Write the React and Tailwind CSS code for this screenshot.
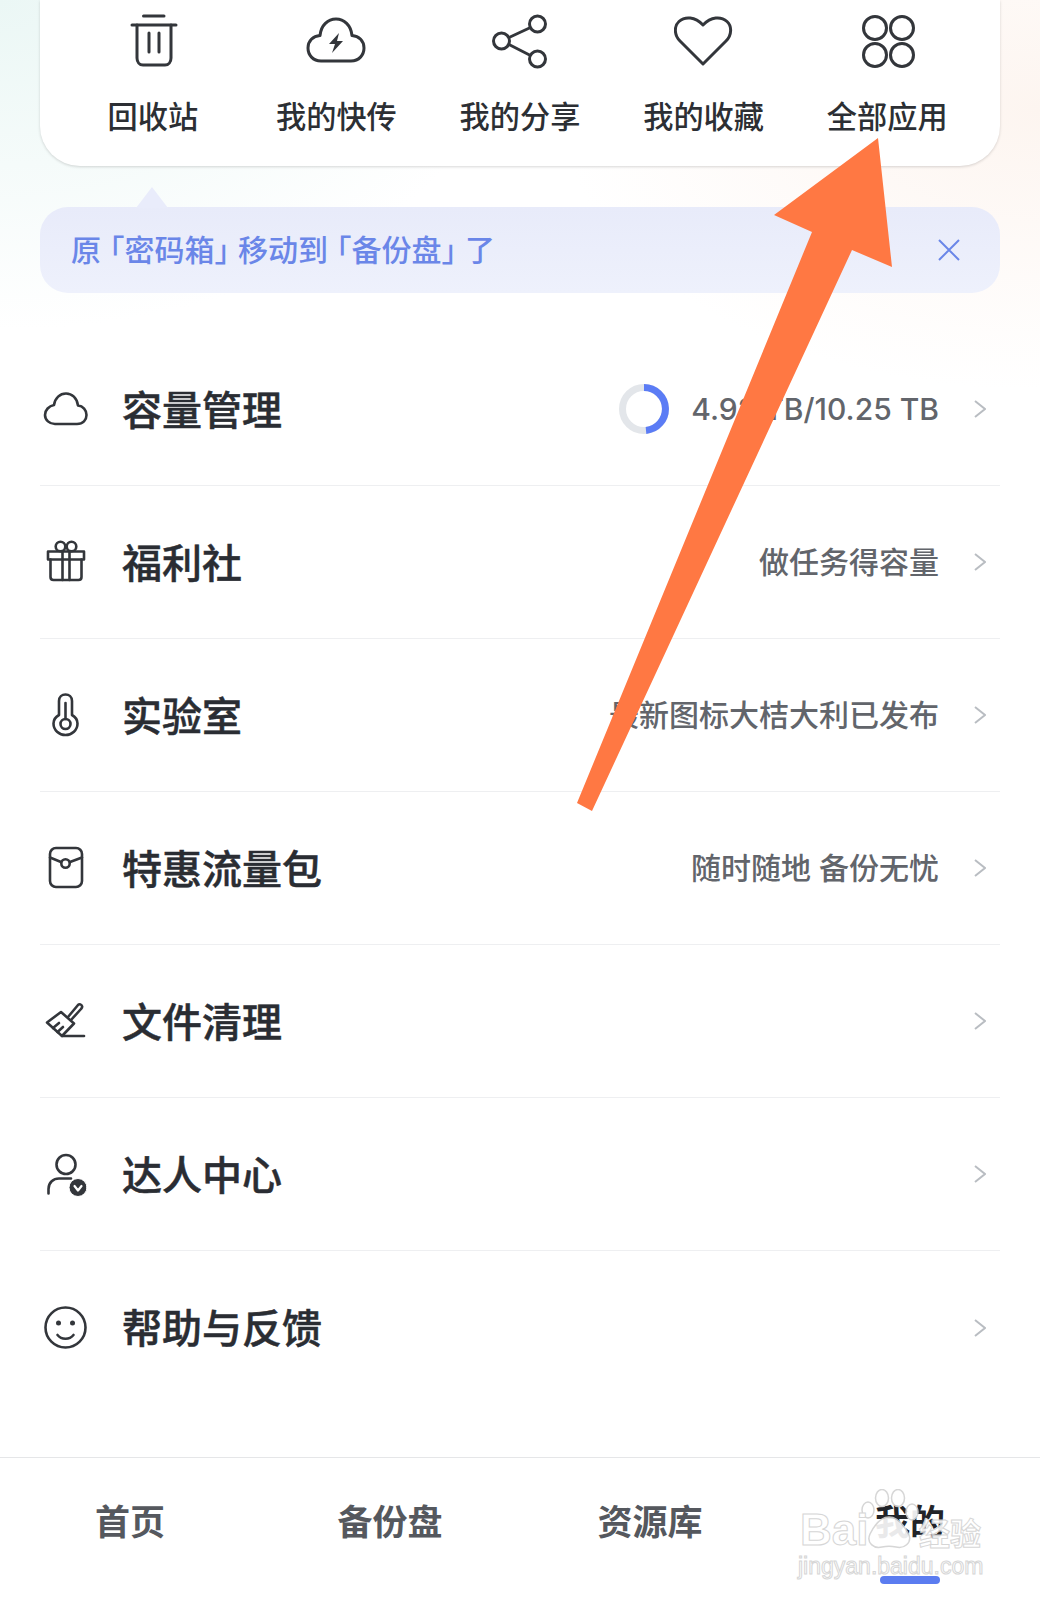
import React from 'react';

const ink = '#33363b';

// top card icons, all in a 60 box
const TrashIcon = () => (
  <svg width="60" height="60" viewBox="0 0 60 60" fill="none" stroke={ink} strokeWidth="3" strokeLinecap="round" strokeLinejoin="round">
    <path d="M20.500 5H41" />
    <path d="M9 14H53" />
    <path d="M14 14V47C14 51 16.500 54 20 54H42C45.500 54 48 51 48 47V14" />
    <path d="M26 22V41M36 22V41" />
  </svg>
);

const CloudBoltIcon = () => (
  <svg width="60" height="60" viewBox="0 0 60 60" fill="none" stroke={ink} strokeWidth="3" strokeLinejoin="round">
    <path d="M15 50H45C53 50 58 44 58 37C58 30 53 25 46 24.500C45 14 38 8 30 8C22 8 15 14 14 24.500C7 25 2 30 2 37C2 44 7 50 15 50Z" />
    <path d="M33 22L23 33H29L26 42L37 30H31L33 22Z" fill={ink} stroke="none" />
  </svg>
);

const ShareIcon = () => (
  <svg width="60" height="60" viewBox="0 0 60 60" fill="none" stroke={ink} strokeWidth="3">
    <circle cx="47.500" cy="13" r="8" />
    <circle cx="11.500" cy="30" r="8" />
    <circle cx="47.500" cy="48" r="8" />
    <path d="M19 26.500L40.500 16.500M19 33.500L40.500 44.500" />
  </svg>
);

const HeartIcon = () => (
  <svg width="60" height="60" viewBox="0 0 60 60" fill="none" stroke={ink} strokeWidth="3" strokeLinejoin="round">
    <path d="M29 53L6 30C0 24 0 15 5 10.500C11 5 21 5.500 29 14C37 5.500 47 5 53 10.500C58 15 58 24 52 30Z" />
  </svg>
);

const AppsIcon = () => (
  <svg width="60" height="60" viewBox="0 0 60 60" fill="none" stroke={ink} strokeWidth="3">
    <circle cx="18" cy="17" r="11.500" />
    <circle cx="45" cy="17" r="11.500" />
    <circle cx="18" cy="44" r="11.500" />
    <circle cx="45" cy="44" r="11.500" />
  </svg>
);

// list icons, all in a 52 box
const rowSvg = { width: 52, height: 52, viewBox: '0 0 52 52', fill: 'none', stroke: ink, strokeWidth: 2.600, strokeLinecap: 'round', strokeLinejoin: 'round' };

const CloudIcon = () => (
  <svg {...rowSvg}>
    <path d="M15 41H37C43 41 46.500 37 46.500 32C46.500 27 43 23 38 22.500C37 15 32 10.500 26 10.500C20 10.500 15 15 14 22C9 23 5 27 5 32C5 37 9.500 41 15 41Z" />
  </svg>
);

const GiftIcon = () => (
  <svg {...rowSvg}>
    <path d="M8 15.500H44V23.500H8Z" />
    <path d="M10.500 23.500V41C10.500 43 11.500 44 13.500 44H38.500C40.500 44 41.500 43 41.500 41V23.500" />
    <path d="M22.500 15.500V44M29.500 15.500V44" />
    <circle cx="20.500" cy="10.500" r="4.800" />
    <circle cx="31.500" cy="10.500" r="4.800" />
  </svg>
);

const ThermoIcon = () => (
  <svg {...rowSvg}>
    <path d="M19 26V12C19 8 22 5.500 25.500 5.500C29 5.500 32 8 32 12V26C35.500 28 37.500 31 37.500 34.500C37.500 41 32 46 25.500 46C19 46 13.500 41 13.500 34.500C13.500 31 15.500 28 19 26Z" />
    <circle cx="25.500" cy="35" r="5" />
    <path d="M25.500 14V30" />
  </svg>
);

const PackIcon = () => (
  <svg {...rowSvg}>
    <rect x="10" y="6" width="32" height="39" rx="6" />
    <path d="M10 15.500L21 20M30 20L42 15.500" />
    <circle cx="25.500" cy="21.500" r="4.200" />
  </svg>
);

const BroomIcon = () => (
  <svg {...rowSvg}>
    <path d="M7 27.500L21 17L34 28.500L22 41L7 27.500Z" />
    <path d="M28 22L38 10C39.500 8.500 41.500 9.500 42 11C42.500 12 42 13 41 14L31 25" />
    <path d="M22 41H44" />
    <path d="M13 33L19 28M17.500 37L23 32" />
  </svg>
);

const PersonIcon = () => (
  <svg {...rowSvg}>
    <circle cx="26" cy="16.500" r="9.500" />
    <path d="M8.500 45.500V41C8.500 34.500 13.500 30.500 19 30.500H31" />
    <circle cx="38" cy="39.500" r="9" fill={ink} stroke="white" strokeWidth="1" />
    <path d="M34.500 38L38 42.500L41.500 38" stroke="white" strokeWidth="2.200" />
  </svg>
);

const SmileIcon = () => (
  <svg {...rowSvg}>
    <circle cx="25.500" cy="25.500" r="20" />
    <circle cx="18.500" cy="21" r="2.500" fill={ink} stroke="none" />
    <circle cx="32.500" cy="21" r="2.500" fill={ink} stroke="none" />
    <path d="M17.500 33C21.500 38 29.500 38 33.500 33" />
  </svg>
);

const Chevron = () => (
  <svg width="12" height="18" viewBox="0 0 12 18" fill="none" stroke="#b9bdc2" strokeWidth="2" className="ml-[35px] shrink-0">
    <path d="M1 1L11 9L1 17" />
  </svg>
);

const StorageRing = () => (
  <svg width="50" height="50" viewBox="0 0 50 50" fill="none" strokeWidth="7">
    <circle cx="25" cy="25" r="21.500" stroke="#e3e6ea" />
    <path d="M25 3.500A21.500 21.500 0 0 1 27 46.400" stroke="#5b7cf5" />
  </svg>
);

const shortcuts = [
  { label: '回收站', icon: <TrashIcon /> },
  { label: '我的快传', icon: <CloudBoltIcon /> },
  { label: '我的分享', icon: <ShareIcon /> },
  { label: '我的收藏', icon: <HeartIcon /> },
  { label: '全部应用', icon: <AppsIcon /> },
];

const rows = [
  { title: '容量管理', icon: <CloudIcon />, ring: true, note: '4.92 TB/10.25 TB' },
  { title: '福利社', icon: <GiftIcon />, note: '做任务得容量' },
  { title: '实验室', icon: <ThermoIcon />, note: '最新图标大桔大利已发布' },
  { title: '特惠流量包', icon: <PackIcon />, note: '随时随地 备份无忧' },
  { title: '文件清理', icon: <BroomIcon /> },
  { title: '达人中心', icon: <PersonIcon /> },
  { title: '帮助与反馈', icon: <SmileIcon /> },
];

const tabs = ['首页', '备份盘', '资源库', '我的'];

const App = () => {
  return (
    <div className="relative flex h-[1600px] w-[1040px] flex-col overflow-hidden bg-white bg-[radial-gradient(ellipse_520px_330px_at_0px_0px,#ebf7f5,transparent),radial-gradient(ellipse_480px_280px_at_1040px_110px,#fdf5f0,transparent)] font-['Inter','Noto_Sans_CJK_SC',sans-serif]">
      {/* shortcuts card, cut off by the top edge */}
      <div className="mx-10 grid h-[166px] shrink-0 grid-cols-5 rounded-b-[40px] bg-white px-[21px] pt-[11px] shadow-[0_1px_3px_rgba(0,0,0,0.16)]">
        {shortcuts.map((item) => (
          <div key={item.label} className="flex flex-col items-center">
            {item.icon}
            <span className="mt-[26px] text-[30.200px] leading-[40px] font-medium text-[#2c2f34]">{item.label}</span>
          </div>
        ))}
      </div>

      {/* notice */}
      <div className="relative mx-10 mt-[41px] flex h-[86px] shrink-0 items-center justify-between rounded-[28px] bg-linear-to-b from-[#e8ebfa] to-[#eef1fc] pr-[40px] pl-[31px]">
        <svg width="32" height="21" viewBox="0 0 32 21" className="absolute top-[-20px] left-[96px]">
          <path d="M0 21L16 0L32 21Z" fill="#e9ecfb" />
        </svg>
        <span className="text-[30px] leading-[40px] font-medium text-[#6a86e8]">
          原<span className="pl-[8.500px] [font-feature-settings:'halt']">「</span>密码箱<span className="pr-[8.500px] [font-feature-settings:'halt']">」</span>移动到<span className="pl-[8.500px] [font-feature-settings:'halt']">「</span>备份盘<span className="pr-[8.500px] [font-feature-settings:'halt']">」</span>了
        </span>
        <svg width="22" height="22" viewBox="0 0 22 22" fill="none" stroke="#6a86e8" strokeWidth="2">
          <path d="M1 1L21 21M21 1L1 21" />
        </svg>
      </div>

      {/* menu */}
      <div className="mx-10 mt-[40px] flex flex-col">
        {rows.map((row, i) => (
          <div key={row.title} className={`flex h-[153px] items-center pr-[14px] ${i < rows.length - 1 ? 'border-b border-[#eeeff1]' : ''}`}>
            <div className="flex w-[52px] shrink-0 justify-center">{row.icon}</div>
            <span className="ml-[30px] pt-[3px] text-[40px] leading-[52px] font-medium text-[#2a2d33] [-webkit-text-stroke:0.5px_#2a2d33]">{row.title}</span>
            <div className="ml-auto flex items-center">
              {row.ring && <div className="mr-[22px]"><StorageRing /></div>}
              {row.note && <span className="text-[30px] leading-[40px] font-medium text-[#62656b]">{row.note}</span>}
              <Chevron />
            </div>
          </div>
        ))}
      </div>

      {/* tab bar */}
      <div className="mt-auto grid h-[143px] shrink-0 grid-cols-4 border-t border-[#e5e6e8] bg-white pt-[44px]">
        {tabs.map((tab, i) => (
          <div key={tab} className="flex flex-col items-center">
            <span className={`text-[35px] leading-[40px] font-bold ${i === 3 ? 'text-[#222429]' : 'text-[#55585e]'}`}>{tab}</span>
            {i === 3 && <div className="mt-[34px] h-2 w-[60px] rounded-full bg-[#5b7cf0]" />}
          </div>
        ))}
      </div>

      {/* arrow drawn on top of the screenshot */}
      <svg width="1040" height="1600" viewBox="0 0 1040 1600" className="pointer-events-none absolute top-0 left-0">
        <path d="M878 138L892 267L852 250L592 811L577 803L812 232L774 215Z" fill="#ff7843" />
      </svg>

      {/* watermark */}
      <div className="pointer-events-none absolute top-[1489px] left-[798px] h-[90px] w-[190px] font-['Liberation_Sans',sans-serif] opacity-90">
        <svg width="60" height="62" viewBox="0 0 60 62" className="absolute top-0 left-[62px]" fill="white" stroke="#d2d2d2" strokeWidth="1.500">
          <ellipse cx="8" cy="21" rx="6" ry="8" />
          <ellipse cx="22" cy="9" rx="6.500" ry="8.500" />
          <ellipse cx="38" cy="9" rx="6.500" ry="8.500" />
          <ellipse cx="52" cy="23" rx="6" ry="8" />
          <path d="M29 28C38 28 45 38 49 46C52 54 44 60 36 58C31 57 27 57 22 58C14 60 6 54 10 45C14 37 20 28 29 28Z" />
        </svg>
        <span className="absolute top-[16px] left-[2px] text-[44px] leading-[50px] font-bold text-white [-webkit-text-stroke:1px_#d2d2d2]">Bai</span>
        <span className="absolute top-[24px] left-[121px] font-['Noto_Sans_CJK_SC',sans-serif] text-[31px] leading-[38px] font-bold text-white [-webkit-text-stroke:1px_#d2d2d2]">经验</span>
        <span className="absolute top-[63px] left-0 text-[23px] leading-[28px] text-white [-webkit-text-stroke:1px_#d2d2d2]">jingyan.baidu.com</span>
      </div>
    </div>
  );
};

export default App;
